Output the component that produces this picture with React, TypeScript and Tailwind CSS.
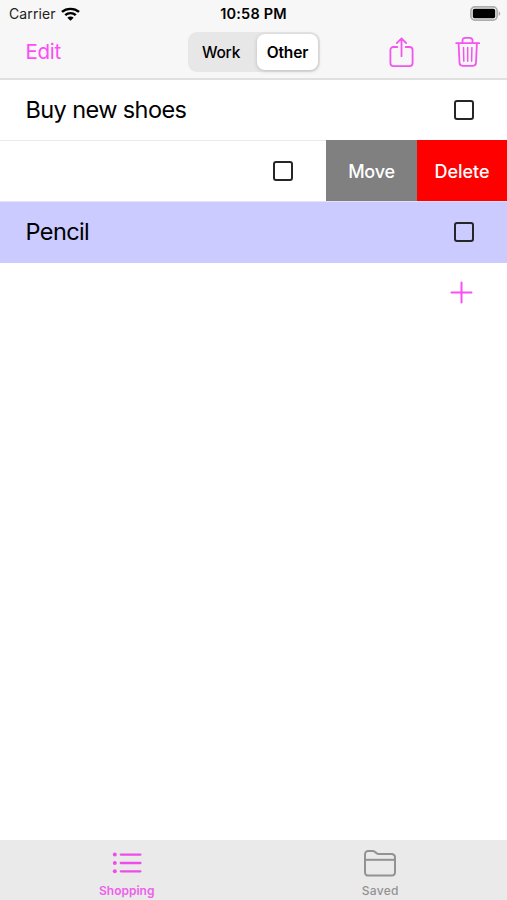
import React from 'react';

const WifiIcon: React.FC = () => (
  <svg width="19" height="14" viewBox="0 0 18 14" preserveAspectRatio="none" fill="none" className="ml-[5px]">
    <path d="M0.9 4.9C5.4.8 12.6.8 17.1 4.9" stroke="#000" strokeWidth="2.4" />
    <path d="M4 8.1C6.8 5.4 11.2 5.4 14 8.1" stroke="#000" strokeWidth="2.3" />
    <path d="M9 13.8 6 10.7C7.7 9.2 10.3 9.2 12 10.7Z" fill="#000" />
  </svg>
);

const BatteryIcon: React.FC = () => (
  <svg width="31" height="15" viewBox="0 0 31 15" fill="none">
    <rect x="0.9" y="0.9" width="26.2" height="13.2" rx="4" stroke="#adadad" strokeWidth="1.7" />
    <rect x="2.8" y="2.8" width="22.4" height="9.4" rx="1.8" fill="#000" />
    <path d="M28.6 5.2C30.8 6 30.8 9 28.6 9.8Z" fill="#adadad" />
  </svg>
);

const ShareIcon: React.FC = () => (
  <svg width="25" height="31" viewBox="0 0 25 31" fill="none" stroke="#f455ef" strokeWidth="1.8" strokeLinecap="round" strokeLinejoin="round">
    <path d="M8.3 10H4.6C2.4 10 1.4 11 1.4 13.2V26C1.4 28.2 2.4 29.2 4.6 29.2H20.4C22.6 29.2 23.6 28.2 23.6 26V13.2C23.6 11 22.6 10 20.4 10H16.7" />
    <path d="M12.5 19.2V1.4M7.8 6.1 12.5 1.3 17.2 6.1" />
  </svg>
);

const TrashIcon: React.FC = () => (
  <svg width="26" height="31" viewBox="0 0 26 31" fill="none" stroke="#f455ef" strokeWidth="1.8" strokeLinecap="round" strokeLinejoin="round">
    <path d="M1.2 6.2H24.2M7.5 6V3.6C7.5 1.6 8.5.9 10.5.9H14.5C16.5.9 17.5 1.6 17.5 3.6V6" />
    <path d="M3.6 6.4 4.5 25.8C4.6 27.9 5.5 28.8 7.5 28.8H18C20 28.8 20.9 27.9 21 25.8L21.9 6.4" />
    <path d="M8.5 10.6 8.8 24.3M12.7 10.6V24.3M16.9 10.6 16.6 24.3" strokeWidth="1.5" />
  </svg>
);

const ListIcon: React.FC = () => (
  <svg width="30" height="22" viewBox="0 0 30 22" fill="none" stroke="#ed4de8" strokeLinecap="round">
    <path d="M8.8 2.6H28.4M8.8 11H28.4M8.8 19.3H28.4" strokeWidth="2.3" />
    <g fill="#ed4de8" stroke="none">
      <circle cx="2.8" cy="2.6" r="2" />
      <circle cx="2.8" cy="11" r="2" />
      <circle cx="2.8" cy="19.3" r="2" />
    </g>
  </svg>
);

const FolderIcon: React.FC = () => (
  <svg width="32" height="27" viewBox="0 0 32 27" fill="none" stroke="#929292" strokeWidth="2" strokeLinejoin="round">
    <path d="M1 22V4.5C1 2.2 2.2 1 4.5 1H8.2C9.6 1 10.3 1.3 11.2 2.1L12.2 2.9C13 3.6 13.7 3.9 15 3.9H27.3C29.7 3.9 31 5.1 31 7.5V22C31 24.4 29.8 25.6 27.4 25.6H4.6C2.2 25.6 1 24.4 1 22Z" />
    <path d="M1 9.8H31" />
  </svg>
);

const Checkbox: React.FC = () => (
  <span className="block h-[20px] w-[20px] rounded-[3px] border-2 border-[#262626]" />
);

const App: React.FC = () => {
  return (
    <div className="flex h-[900px] w-[507px] flex-col overflow-hidden bg-white font-['Inter',sans-serif] text-black">
      <header className="h-[80px] border-b-2 border-[#e0e0e0] bg-[#f7f7f7]">
        {/* Status bar */}
        <div className="grid h-[27px] grid-cols-3 items-center pl-[9px] pr-[6px]">
          <div className="flex items-center text-[14px] tracking-[0.1px] text-[#222]">
            Carrier
            <WifiIcon />
          </div>
          <span className="-ml-[3px] text-center text-[14.5px] font-semibold tracking-[0.2px]">10:58 PM</span>
          <div className="flex justify-end">
            <BatteryIcon />
          </div>
        </div>

        {/* Navigation bar */}
        <div className="flex h-[50px] items-center pl-[25.5px] pr-[26px]">
          <button className="w-[162.5px] pt-[1px] text-left text-[20.5px] tracking-[-0.3px] text-[#fc4df7]">Edit</button>
          <div className="flex h-[40px] w-[132px] rounded-[9px] bg-[#e7e7e7] p-[2px] text-[15.5px] tracking-[-0.2px]">
            <button className="w-[62px] pt-[1px] font-medium">Work</button>
            <button className="ml-[5px] h-[36px] flex-1 rounded-[8px] bg-white pt-[1px] font-semibold tracking-[-0.1px] shadow-[0_1px_4px_rgba(0,0,0,0.18)]">
              Other
            </button>
          </div>
          <div className="ml-auto flex items-center gap-[41px]">
            <ShareIcon />
            <TrashIcon />
          </div>
        </div>
      </header>

      <main className="flex-1">
        <div className="flex h-[60px] items-center justify-between pl-[25.5px] pr-[33px]">
          <span className="text-[23.5px] tracking-[-0.6px]">Buy new shoes</span>
          <Checkbox />
        </div>

        {/* Swiped row with its actions open */}
        <div className="flex h-[62px] border-b border-[#e5e0f4]">
          <div className="flex w-[326px] items-center justify-end border-t border-[#e9e9e9] pr-[33px]">
            <Checkbox />
          </div>
          <button className="w-[91px] bg-[#808080] pt-[1px] text-[18px] font-medium tracking-[-0.2px] text-white">Move</button>
          <button className="w-[90px] bg-[#fe0000] pt-[1px] text-[18px] font-medium text-white">Delete</button>
        </div>

        <div className="flex h-[61px] items-center justify-between bg-[#cbcbff] pb-[1px] pl-[25.5px] pr-[33px]">
          <span className="text-[23.5px] tracking-[-0.6px]">Pencil</span>
          <Checkbox />
        </div>

        <div className="flex h-[59px] items-center justify-end pr-[34px]">
          <svg width="23" height="23" viewBox="0 0 23 23" stroke="#f94ff5" strokeWidth="2" strokeLinecap="round">
            <path d="M11.5 1.5V21.5M1.5 11.5H21.5" />
          </svg>
        </div>
      </main>

      <nav className="grid h-[60px] grid-cols-2 bg-[#eaeaea] text-[12px] font-medium">
        <a className="flex flex-col items-center text-[#ee61ea]">
          <span className="flex h-[43px] items-center pt-[3px]">
            <ListIcon />
          </span>
          <span className="font-semibold leading-[15px]">Shopping</span>
        </a>
        <a className="flex flex-col items-center text-[#929292]">
          <span className="flex h-[43px] items-center pt-[3px]">
            <FolderIcon />
          </span>
          <span className="leading-[15px] tracking-[0.3px]">Saved</span>
        </a>
      </nav>
    </div>
  );
};

export default App;
